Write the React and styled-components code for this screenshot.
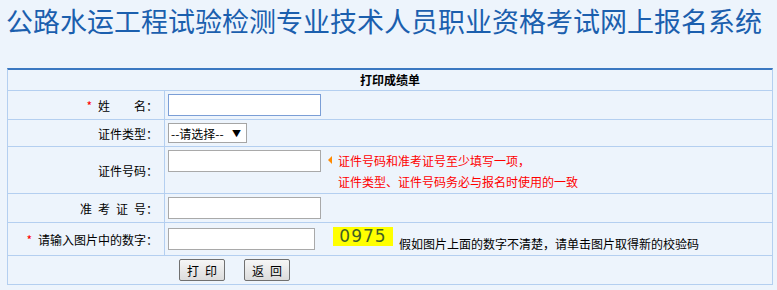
import React from "react";
import styled, { createGlobalStyle } from "styled-components";

const GlobalStyle = createGlobalStyle`
  html, body {
    margin: 0;
    padding: 0;
    background: #edf4fc;
  }
  body {
    font-family: "Noto Sans CJK SC", "Liberation Sans", sans-serif;
    font-size: 12px;
    color: #000;
  }
`;

const Page = styled.div`
  width: 777px;
  height: 290px;
  overflow: hidden;
`;

const Title = styled.h1`
  margin: 0;
  padding: 7px 0 0 6px;
  height: 61px;
  font-size: 27px;
  line-height: 27px;
  font-weight: 400;
  color: #1b5fae;
  white-space: nowrap;
`;

const Form = styled.div`
  margin-left: 7px;
  width: 766px;
  box-sizing: border-box;
  border: 1px solid #b4cff0;
  border-top: 2px solid #3b78c1;
`;

const Header = styled.div`
  height: 20px;
  line-height: 20px;
  text-align: center;
  font-weight: bold;
`;

const Row = styled.div`
  display: grid;
  grid-template-columns: ${(p) => (p.$full ? "1fr" : "157px 1fr")};
  box-sizing: border-box;
  height: ${(p) => p.$h}px;
  border-top: 1px solid #b4cff0;
`;

const Label = styled.div`
  display: flex;
  align-items: center;
  justify-content: flex-end;
  padding-right: 6px;
  border-right: 1px solid #b4cff0;
  white-space: pre;
`;

const Star = styled.span`
  color: #f00;
  margin-right: 6px;
`;

const Field = styled.div`
  display: flex;
  align-items: ${(p) => (p.$top ? "flex-start" : "center")};
  padding: ${(p) => (p.$top ? "3px 0 0 3px" : "0 0 0 3px")};
`;

const Input = styled.input`
  width: ${(p) => p.$w || 153}px;
  height: 22px;
  box-sizing: border-box;
  margin: 0;
  padding: 0 2px;
  border: 1px solid ${(p) => (p.$focus ? "#7b9ed6" : "#a9a9a9")};
  background: #fff;
  font-family: inherit;
  font-size: 12px;
  outline: none;
  caret-color: #000;
`;

const SelectBox = styled.div`
  display: flex;
  align-items: center;
  width: 79px;
  height: 20px;
  box-sizing: border-box;
  border: 1px solid #a5a5a5;
  background: #fff;
`;

const Select = styled.select`
  appearance: none;
  border: none;
  background: transparent;
  padding: 0 0 0 2px;
  margin: 0;
  width: 60px;
  font-family: inherit;
  font-size: 12px;
  color: #000;
  outline: none;
`;

const Arrow = styled.span`
  font-size: 9px;
  margin-left: 3px;
`;

const Hint = styled.div`
  display: flex;
  margin-left: 7px;
`;

const Triangle = styled.span`
  width: 0;
  height: 0;
  margin: 6px 6px 0 0;
  border-top: 4px solid transparent;
  border-bottom: 4px solid transparent;
  border-right: 4px solid #ff8a00;
`;

const HintLines = styled.div`
  color: #f00;
  line-height: 21px;
`;

const Captcha = styled.span`
  margin: 0 0 5px 18px;
  width: 60px;
  height: 19px;
  background: #ffff00;
  color: #3f5f26;
  font-family: "DejaVu Sans", sans-serif;
  font-size: 17px;
  line-height: 19px;
  letter-spacing: 1px;
  text-align: center;
  cursor: pointer;
`;

const CaptchaNote = styled.span`
  margin: 8px 0 0 6px;
`;

const Buttons = styled.div`
  display: flex;
  align-items: center;
  gap: 19px;
  padding-left: 171px;
`;

const Button = styled.button`
  width: 46px;
  height: 22px;
  margin: 0;
  padding: 0;
  border: 1px solid #707070;
  border-radius: 2px;
  background: linear-gradient(#f6f6f6, #dcdcdc);
  font-family: inherit;
  font-size: 12px;
  color: #000;
  white-space: pre;
`;

export default function App() {
  return (
    <Page>
      <GlobalStyle />
      <Title>公路水运工程试验检测专业技术人员职业资格考试网上报名系统</Title>
      <Form>
        <Header>打印成绩单</Header>
        <Row $h={29}>
          <Label>
            <Star>*</Star>
            {"姓\u3000\u3000名："}
          </Label>
          <Field>
            <Input $focus autoFocus />
          </Field>
        </Row>
        <Row $h={27}>
          <Label>证件类型：</Label>
          <Field>
            <SelectBox>
              <Select defaultValue="">
                <option value="">--请选择--</option>
                <option value="1">身份证</option>
              </Select>
              <Arrow>▼</Arrow>
            </SelectBox>
          </Field>
        </Row>
        <Row $h={47}>
          <Label>证件号码：</Label>
          <Field $top>
            <Input />
            <Hint>
              <Triangle />
              <HintLines>
                <div>证件号码和准考证号至少填写一项，</div>
                <div>证件类型、证件号码务必与报名时使用的一致</div>
              </HintLines>
            </Hint>
          </Field>
        </Row>
        <Row $h={29}>
          <Label>{"准\u2002考\u2002证\u2002号："}</Label>
          <Field>
            <Input />
          </Field>
        </Row>
        <Row $h={33}>
          <Label>
            <Star>*</Star>
            请输入图片中的数字：
          </Label>
          <Field>
            <Input $w={147} />
            <Captcha>0975</Captcha>
            <CaptchaNote>假如图片上面的数字不清楚，请单击图片取得新的校验码</CaptchaNote>
          </Field>
        </Row>
        <Row $h={29} $full>
          <Buttons>
            <Button>{"打\u2002印"}</Button>
            <Button>{"返\u2002回"}</Button>
          </Buttons>
        </Row>
      </Form>
    </Page>
  );
}
